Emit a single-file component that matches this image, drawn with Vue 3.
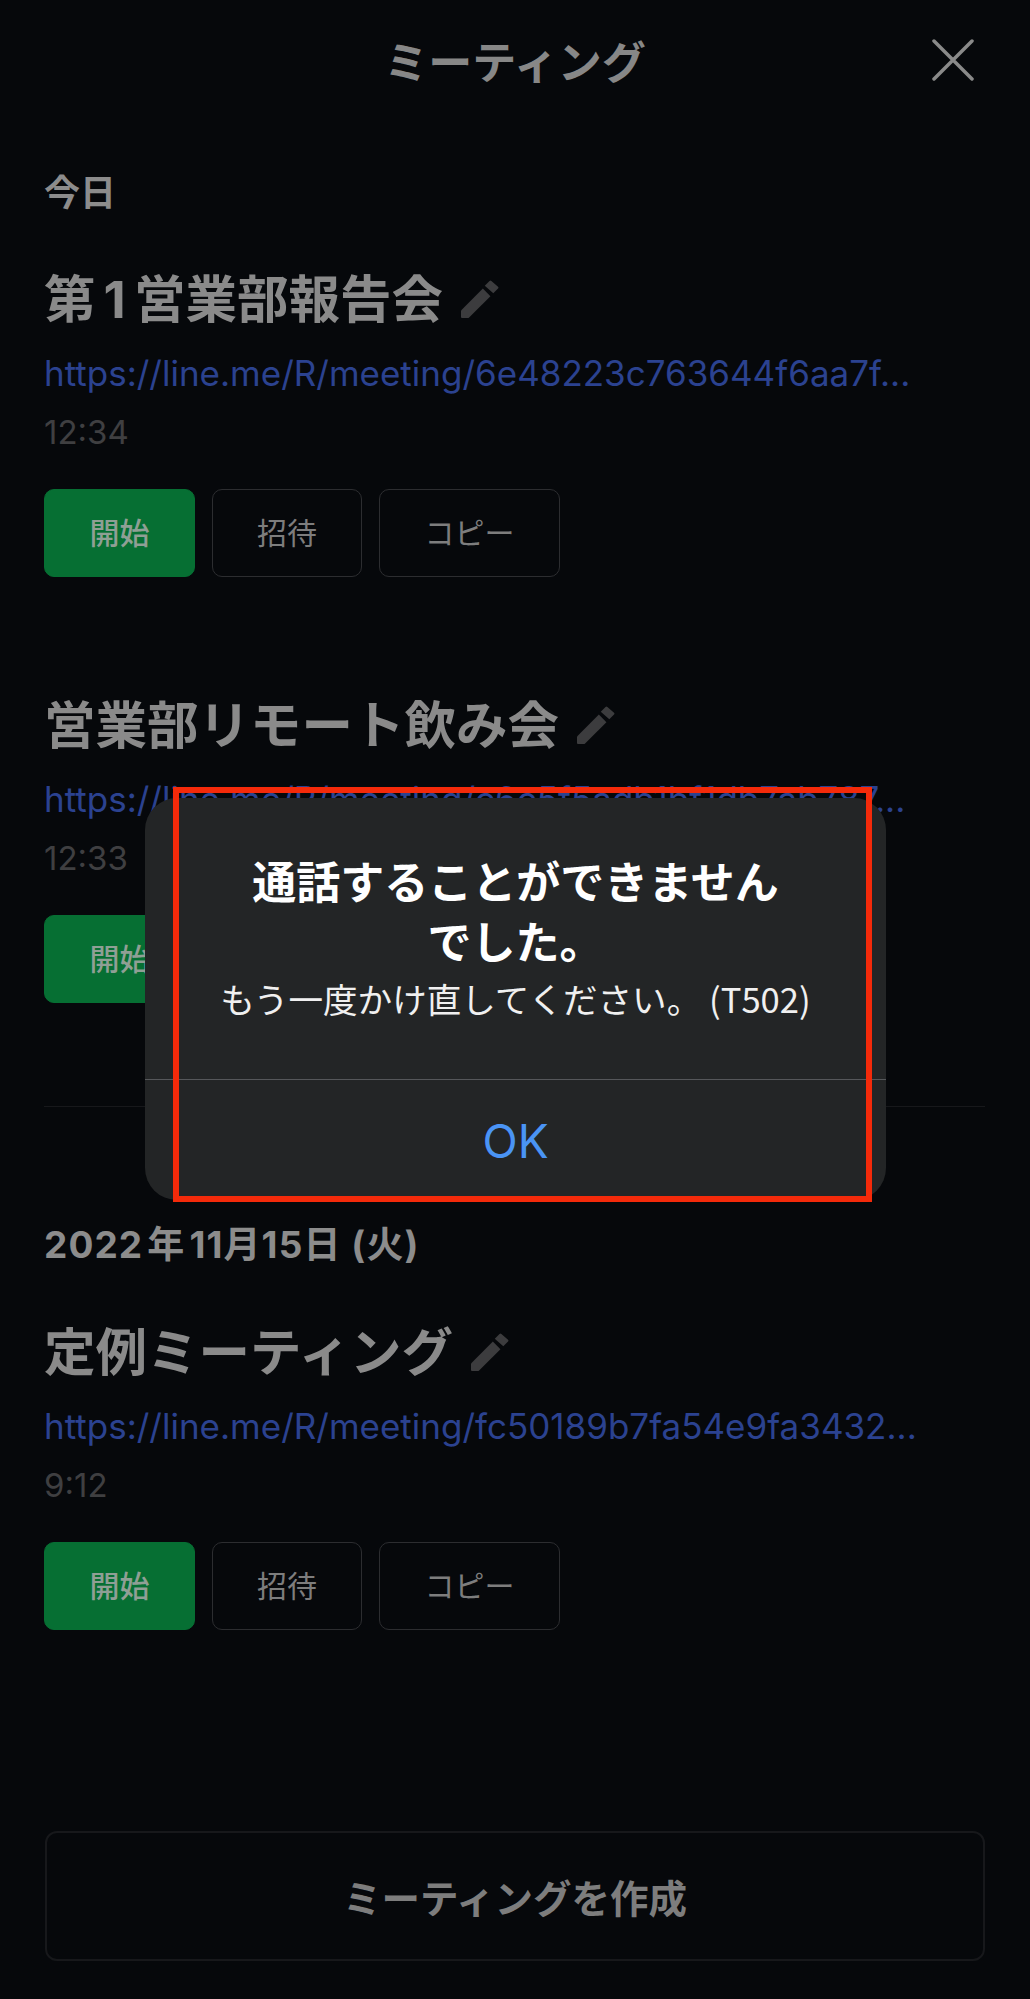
<script setup>
const sections = [
  {
    label: '今日',
    meetings: [
      { title: '第\u200a\u200a1\u200a\u200a営業部報告会', url: 'https://line.me/R/meeting/6e48223c763644f6aa7f...', time: '12:34' },
      { title: '営業部リモート飲み会', url: 'https://line.me/R/meeting/c6c5f5adb1bf1db7ab787...', time: '12:33' }
    ]
  },
  {
    label: '2022\u200a年\u200a11月15日 (火)',
    meetings: [
      { title: '定例ミーティング', url: 'https://line.me/R/meeting/fc50189b7fa54e9fa3432...', time: '9:12' }
    ]
  }
]
</script>

<template>
  <div class="page">
    <header class="header">
      <span></span>
      <h1 class="header-title">ミーティング</h1>
      <svg class="close" viewBox="0 0 42 42" aria-hidden="true">
        <path d="M2 2 L40 40 M40 2 L2 40" />
      </svg>
    </header>

    <main class="content">
      <section v-for="(section, s) in sections" :key="section.label" class="section">
        <div v-if="s > 0" class="divider"></div>
        <h2 class="day">{{ section.label }}</h2>
        <article v-for="m in section.meetings" :key="m.url" class="meeting">
          <div class="title-row">
            <h3 class="title">{{ m.title }}</h3>
            <svg class="pencil" viewBox="0 0 40 40" aria-hidden="true">
              <path d="M0 32 L23 9 L31 17 L8 40 L1 40 Q0 40 0 39 Z" />
              <path d="M25 6 L30 1 Q31 0 32 1 L39 7 Q40 8 39 9 L34 14 Z" />
            </svg>
          </div>
          <div class="url">{{ m.url }}</div>
          <div class="time">{{ m.time }}</div>
          <div class="actions">
            <button class="btn primary">開始</button>
            <button class="btn middle">招待</button>
            <button class="btn wide">コピー</button>
          </div>
        </article>
      </section>
      <button class="create">ミーティングを作成</button>
    </main>

    <div class="dialog">
      <div class="dialog-body">
        <p class="dialog-title">通話することができません<br />でした。</p>
        <p class="dialog-text">もう一度かけ直してください。 (T502)</p>
      </div>
      <div class="dialog-action">OK</div>
    </div>
    <div class="highlight"></div>
  </div>
</template>

<style>
html, body { margin: 0; background: #06080b; }
</style>

<style scoped>
.page {
  position: relative;
  width: 1030px;
  height: 1999px;
  overflow: hidden;
  background: #06080b;
  font-family: "Inter", "Noto Sans CJK JP", sans-serif;
  color: #8c8c8c;
}
.header {
  height: 120px;
  display: grid;
  grid-template-columns: 1fr auto 1fr;
  align-items: center;
}
.header-title {
  margin: 0;
  font-size: 44px;
  line-height: 60px;
  font-weight: 700;
  color: #878787;
  font-family: "Noto Sans CJK JP", sans-serif;
}
.close {
  justify-self: end;
  width: 42px;
  height: 42px;
  margin: 0 56px 0 0;
  fill: none;
  stroke: #8a8a8a;
  stroke-width: 3.5;
  stroke-linecap: round;
}
.content { padding: 0 45px 0 44px; }
.divider {
  height: 1px;
  background: #17181b;
  margin-top: 103px;
}
.day {
  margin: 118px 0 0;
  font-size: 37px;
  line-height: 40px;
  font-weight: 700;
  letter-spacing: 1.1px;
  color: #8c8c8c;
}
.section:first-child .day {
  margin-top: 53px;
  font-size: 36px;
  letter-spacing: 0;
}
.meeting { margin-top: 57px; }
.section:first-child .meeting { margin-top: 56px; }
.section:first-child .meeting + .meeting { margin-top: 118px; }
.title-row {
  display: flex;
  align-items: center;
  gap: 18px;
  height: 60px;
}
.title {
  margin: 0;
  font-size: 51.5px;
  line-height: 60px;
  font-weight: 700;
  color: #8a8a8a;
}
.pencil {
  width: 38px;
  height: 38px;
  fill: #3c3c3e;
}
.url {
  margin-top: 22px;
  font-size: 35px;
  line-height: 44px;
  color: #2b4290;
  white-space: nowrap;
}
.time {
  margin-top: 17px;
  font-size: 33px;
  line-height: 40px;
  color: #3f3f41;
}
.actions {
  margin-top: 37px;
  display: flex;
  gap: 17px;
}
.btn {
  width: 151px;
  height: 88px;
  padding: 0 0 4px;
  box-sizing: border-box;
  border: 1.5px solid #2c2d30;
  border-radius: 10px;
  background: transparent;
  color: #7d7d7d;
  font: 400 30px/1 "Noto Sans CJK JP", sans-serif;
}
.btn.middle { width: 150px; }
.btn.wide { width: 181px; }
.btn.primary {
  background: #066f33;
  border-color: #066f33;
  color: #8f9f95;
  font-weight: 500;
}
.create {
  display: block;
  width: 940px;
  height: 130px;
  margin: 201px 0 0 1px;
  box-sizing: border-box;
  background: transparent;
  border: 2px solid #17181b;
  border-radius: 12px;
  color: #7d7d7d;
  font: 700 38.5px/1 "Noto Sans CJK JP", sans-serif;
}
.dialog {
  position: absolute;
  left: 145px;
  top: 798px;
  width: 741px;
  height: 402px;
  display: flex;
  flex-direction: column;
  background: #232526;
  border-radius: 32px;
  font-family: "Noto Sans CJK JP", sans-serif;
  text-align: center;
}
.dialog-body {
  height: 282px;
  box-sizing: border-box;
  padding-top: 52px;
  border-bottom: 1.5px solid #55575a;
}
.dialog-title {
  margin: 0;
  font-size: 44px;
  line-height: 60px;
  font-weight: 700;
  color: #fff;
}
.dialog-text {
  margin: 6px 0 0;
  font-size: 34.6px;
  line-height: 44px;
  color: #f0f0f0;
}
.dialog-action {
  flex: 1;
  display: flex;
  align-items: center;
  justify-content: center;
  padding-top: 2px;
  font-family: "Inter", sans-serif;
  font-size: 46px;
  color: #4a94f5;
}
.highlight {
  position: absolute;
  left: 173px;
  top: 787px;
  width: 699px;
  height: 415px;
  box-sizing: border-box;
  border: 6.5px solid #f42a0a;
  pointer-events: none;
}
</style>
